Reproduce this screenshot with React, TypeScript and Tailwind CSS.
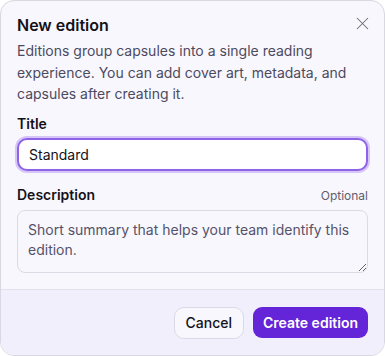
import React from 'react';
import { X } from 'lucide-react';

export default function App() {
  return (
    <div className="h-[356px] w-[385px] bg-white font-['Inter',sans-serif]">
      <div className="flex h-full flex-col overflow-hidden rounded-[14px] border border-[#d9d8e0] bg-[#f8f7fd]">
        <div className="flex flex-col px-4 pt-[12px]">
          <div className="flex items-start justify-between">
            <h2 className="text-[16px] font-semibold leading-[24px] text-[#141218]">New edition</h2>
            <button className="-mr-[5px] mt-0 text-[#6e6c78]">
              <X className="h-[21px] w-[21px]" strokeWidth={1.2} />
            </button>
          </div>
          <p className="mt-[3px] text-[14px] leading-[21.5px] text-[#4d4a5e]">
            Editions group capsules into a single reading experience. You can add cover art, metadata, and capsules after creating it.
          </p>

          <label className="mt-[9px] text-[14px] font-semibold leading-[20px] text-[#141218]">Title</label>
          <div className="mt-[4px] flex h-[33px] items-center rounded-[10px] border-2 border-[#8f63e8] bg-white px-[10px] ring-2 ring-[#d6c6f7]">
            <span className="text-[14px] text-[#141218]">Standard</span>
          </div>

          <div className="mt-[14px] flex items-baseline justify-between">
            <label className="text-[14px] font-semibold leading-[20px] text-[#141218]">Description</label>
            <span className="text-[12px] text-[#5f5c6c]">Optional</span>
          </div>
          <textarea
            className="mt-[5px] h-[63px] resize-y rounded-[8px] border border-[#dcdae6] bg-[#f8f7fd] px-[10px] py-[9px] text-[14px] leading-[20px] text-[#141218] placeholder:text-[#55526a] focus:outline-none"
            placeholder="Short summary that helps your team identify this edition."
          />
        </div>

        <div className="mt-auto flex h-[66px] items-center justify-end gap-[9px] border-t border-[#e3e1ec] bg-[#f1effb] px-4">
          <button className="h-[32px] rounded-[10px] border border-[#dcdae6] bg-[#f8f7fd] px-[11px] text-[14px] font-medium text-[#141218]">
            Cancel
          </button>
          <button className="h-[31px] rounded-[9px] bg-[#6425d8] px-[10px] text-[14px] font-semibold text-white">
            Create edition
          </button>
        </div>
      </div>
    </div>
  );
}
